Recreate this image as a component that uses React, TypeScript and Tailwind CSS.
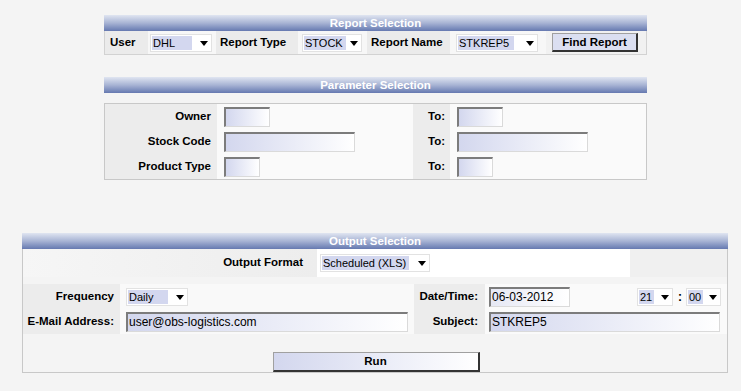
import React from 'react';

function Header({ title }: { title: string }) {
  return (
    <div className="h-[16px] bg-linear-to-b from-[#e0e5f1] via-[#a8b4d4] to-[#6679b0] text-center text-[11.5px] font-bold leading-[16px] text-white">
      {title}
    </div>
  );
}

function Select({ value, className, boxClass }: { value: string; className: string; boxClass: string }) {
  return (
    <div className={`relative flex h-[18px] items-center border border-[#e2e2e2] bg-white ${className}`}>
      <span className={`ml-[1px] h-[14px] bg-[#d3d7ef] pl-[1px] text-[11px] font-normal leading-[14px] text-black ${boxClass}`}>{value}</span>
      <span className="absolute right-[3px] top-[6px] h-0 w-0 border-x-[4px] border-t-[5px] border-x-transparent border-t-black" />
    </div>
  );
}

function Field({ value = '', className }: { value?: string; className: string }) {
  return (
    <div
      className={`h-[20px] border-l-2 border-t-2 border-b border-r border-l-[#7c7c7c] border-t-[#7c7c7c] border-b-[#dadada] border-r-[#dadada] bg-linear-to-r from-[#d3d7ee] to-white pl-[1px] text-[12px] font-normal leading-[17px] text-black ${className}`}
    >
      {value}
    </div>
  );
}

function Btn({ label, className }: { label: string; className: string }) {
  return (
    <div
      className={`border-l border-t border-b-2 border-r-2 border-l-[#a0a0a0] border-t-[#a0a0a0] border-b-[#333] border-r-[#333] text-center text-[11.5px] font-bold text-black ${className}`}
    >
      {label}
    </div>
  );
}

export default function App() {
  const params = [
    { label: 'Owner', w: 'w-[46px]' },
    { label: 'Stock Code', w: 'w-[131px]' },
    { label: 'Product Type', w: 'w-[36px]' },
  ];

  return (
    <div className="min-h-[391px] bg-[#f4f4f4] pt-[15px] font-['Liberation_Sans',Arial,sans-serif] text-[11.5px] text-black">
      {/* Report Selection */}
      <div className="ml-[104px] w-[543px]">
        <Header title="Report Selection" />
        <div className="flex h-[24px] border-x border-b border-[#d2d2d2] font-bold">
          <div className="flex w-[43px] items-center bg-[#ebebeb] pl-[5px]">User</div>
          <div className="flex w-[68px] items-center bg-[#f7f7f7] pl-[2px]">
            <Select value="DHL" className="w-[62px]" boxClass="w-[40px]" />
          </div>
          <div className="flex w-[82px] items-center bg-[#ebebeb] pl-[4px]">Report Type</div>
          <div className="flex w-[69px] items-center bg-[#f7f7f7] pl-[4px]">
            <Select value="STOCK" className="w-[60px]" boxClass="w-[42px]" />
          </div>
          <div className="flex w-[83px] items-center bg-[#ebebeb] pl-[4px]">Report Name</div>
          <div className="flex w-[96px] items-center bg-[#f7f7f7] pl-[6px]">
            <Select value="STKREP5" className="w-[82px]" boxClass="w-[56px]" />
          </div>
          <div className="flex flex-1 items-center bg-[#f1f1f1] pl-[6px]">
            <Btn label="Find Report" className="h-[19px] w-[86px] bg-[#dbdff1] leading-[16px]" />
          </div>
        </div>
      </div>

      {/* Parameter Selection */}
      <div className="ml-[104px] mt-[22px] w-[543px]">
        <Header title="Parameter Selection" />
        <div className="mt-[10px] border border-[#c8c8c8] font-bold">
          {params.map((p) => (
            <div key={p.label} className="flex h-[25px]">
              <div className="flex w-[112px] items-center justify-end bg-[#ececec] pr-[6px]">{p.label}</div>
              <div className="flex w-[196px] items-center bg-[#fafafa] pl-[7px]">
                <Field className={p.w} />
              </div>
              <div className="flex w-[37px] items-center justify-end bg-[#ececec] pr-[5px]">To:</div>
              <div className="flex flex-1 items-center bg-[#fafafa] pl-[7px]">
                <Field className={p.w} />
              </div>
            </div>
          ))}
        </div>
      </div>

      {/* Output Selection */}
      <div className="ml-[22px] mt-[53px] w-[706px]">
        <Header title="Output Selection" />
        <div className="border-x border-b border-[#c8c8c8] font-bold">
          <div className="flex h-[28px]">
            <div className="flex w-[294px] items-center justify-end bg-linear-to-r from-[#f6f6f6] to-[#ededed] pr-[14px]">
              Output Format
            </div>
            <div className="flex w-[313px] items-center bg-white pl-[3px]">
              <Select value="Scheduled (XLS)" className="w-[110px]" boxClass="w-[87px]" />
            </div>
            <div className="flex-1 bg-[#f0f0f0]" />
          </div>
          <div className="mt-[7px] flex h-[25px]">
            <div className="flex w-[97px] items-center justify-end bg-[#ececec] pr-[6px]">Frequency</div>
            <div className="flex w-[294px] items-center bg-[#f9f9f9] pl-[6px]">
              <Select value="Daily" className="w-[62px]" boxClass="w-[40px]" />
            </div>
            <div className="flex w-[71px] items-center justify-end bg-[#ececec] pr-[7px]">Date/Time:</div>
            <div className="flex flex-1 items-center bg-[#fafafa] pl-[4px]">
              <Field value="06-03-2012" className="w-[81px] from-[#e6e8f4]" />
              <Select value="21" className="ml-[67px] w-[36px]" boxClass="w-[15px]" />
              <span className="ml-[5px] mr-[4px] text-[12px] font-bold leading-[12px]">:</span>
              <Select value="00" className="w-[35px]" boxClass="w-[15px]" />
            </div>
          </div>
          <div className="flex h-[25px]">
            <div className="flex w-[97px] items-center justify-end bg-[#ececec] pr-[6px]">E-Mail Address:</div>
            <div className="flex w-[294px] items-center bg-[#f9f9f9] pl-[6px]">
              <Field value="user@obs-logistics.com" className="w-[282px]" />
            </div>
            <div className="flex w-[71px] items-center justify-end bg-[#ececec] pr-[7px]">Subject:</div>
            <div className="flex flex-1 items-center bg-[#fafafa] pl-[4px]">
              <Field value="STKREP5" className="w-[231px]" />
            </div>
          </div>
          <div className="flex justify-center pt-[18px]">
            <Btn label="Run" className="ml-[2px] h-[20px] w-[207px] bg-linear-to-r from-[#d3d7ee] to-white leading-[17px]" />
          </div>
        </div>
      </div>
    </div>
  );
}
